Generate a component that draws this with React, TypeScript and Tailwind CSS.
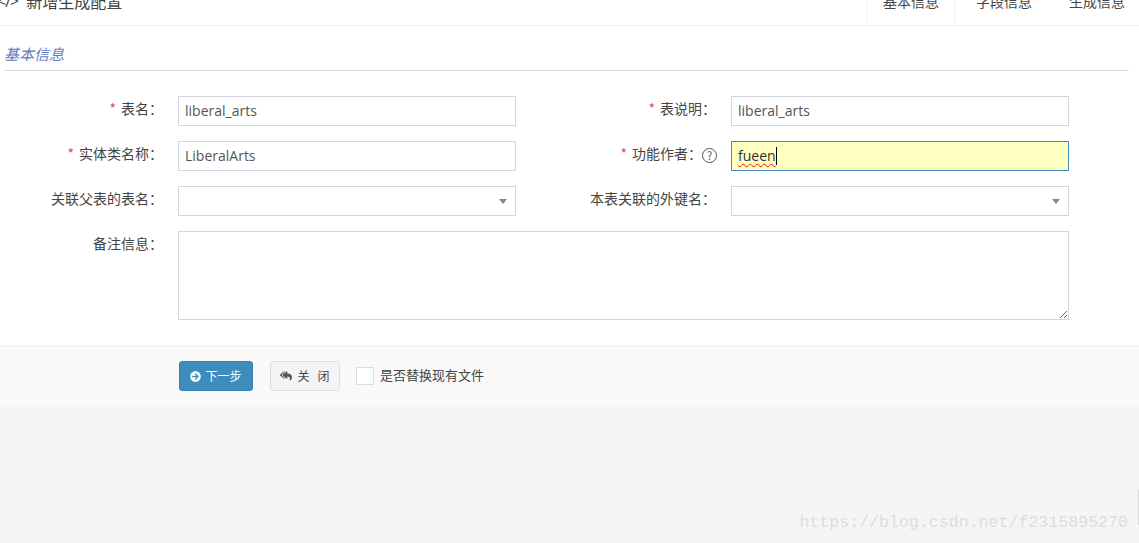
import { FaReplyAll, FaArrowCircleRight } from "react-icons/fa";

const cjk = "font-['Noto_Sans_CJK_SC','Noto_Sans',sans-serif]";
const inputBox = "h-[30px] w-[338px] border border-[#d2d6de] bg-white px-[6px] pb-[1px] text-[14px] text-[#555] font-['Open_Sans',sans-serif] outline-none";

function Label({ text, required, help, width }: { text: string; required?: boolean; help?: boolean; width: string }) {
  return (
    <div className={`${width} shrink-0 flex items-center justify-end pb-[6px] text-[14px] text-[#444] whitespace-nowrap`}>
      {required && <span className="mr-[5px] text-[14px] text-[#dd4b50]">*</span>}
      <span>{text}：</span>
      {help && (
        <span className="mt-[4px] flex h-[15px] w-[15px] items-center justify-center rounded-full border border-[#555] text-[11px] leading-none text-[#555]">?</span>
      )}
    </div>
  );
}

function Select() {
  return (
    <div className="relative h-[30px] w-[338px] border border-[#d2d6de] bg-white">
      <span className="absolute right-[8px] top-[12px] h-0 w-0 border-x-[4px] border-t-[5px] border-x-transparent border-t-[#888]" />
    </div>
  );
}

export default function App() {
  return (
    <div className={`relative h-[543px] w-[1139px] overflow-hidden bg-[#f4f5f7] ${cjk}`}>
      <div className="bg-white">
        {/* header with tabs, cut off at the top of the shot */}
        <div className="flex h-[26px] items-end justify-between overflow-hidden border-b border-[#eeeeee]">
          <div className="mb-[14px] flex items-center whitespace-nowrap text-[16px] leading-[20px] text-[#444]">
            <span className="ml-[-3px] mr-[8px] font-['Open_Sans',sans-serif] text-[16px] tracking-[-1px]">&lt;/&gt;</span>
            <span>新增生成配置</span>
          </div>
          <div className="mb-[-1px] flex h-[40px] shrink-0 whitespace-nowrap text-[14px] text-[#444]">
            <div className="w-[88px] border-x border-[#f2f2f2] bg-white pl-[15px] pt-[5px] leading-[20px]">基本信息</div>
            <div className="w-[93px] border-b border-[#eeeeee] pl-[21px] pt-[5px] leading-[20px]">字段信息</div>
            <div className="w-[91px] border-b border-[#eeeeee] pl-[21px] pt-[5px] leading-[20px]">生成信息</div>
          </div>
        </div>

        <div className="px-[4px] pr-[10px] pt-[18px]">
          <div className="h-[27px] border-b border-[#dddddd] text-[15px] italic leading-[20px] text-[#6379bd]">基本信息</div>
        </div>

        <div className="flex flex-col gap-[15px] pb-[25px] pt-[25px]">
          <div className="flex">
            <Label text="表名" required width="w-[163px]" />
            <input className={`ml-[15px] ${inputBox}`} defaultValue="liberal_arts" />
            <Label text="表说明" required width="w-[200px]" />
            <input className={`ml-[15px] ${inputBox}`} defaultValue="liberal_arts" />
          </div>
          <div className="flex">
            <Label text="实体类名称" required width="w-[163px]" />
            <input className={`ml-[15px] ${inputBox}`} defaultValue="LiberalArts" />
            <Label text="功能作者" required help width="w-[201px]" />
            <div className="ml-[14px] flex h-[30px] w-[338px] items-center border border-[#3c8dbc] bg-[#ffffc0] px-[6px] pb-[1px] font-['Open_Sans',sans-serif] text-[14px] text-[#333]">
              <span className="underline decoration-[#f01010] decoration-wavy decoration-1 underline-offset-2">fueen</span>
              <span className="h-[18px] w-px bg-black" />
            </div>
          </div>
          <div className="flex">
            <Label text="关联父表的表名" width="w-[163px]" />
            <div className="ml-[15px]"><Select /></div>
            <Label text="本表关联的外键名" width="w-[200px]" />
            <div className="ml-[15px]"><Select /></div>
          </div>
          <div className="flex">
            <div className="flex w-[163px] shrink-0 justify-end pt-[2px] text-[14px] text-[#444]">备注信息：</div>
            <textarea className="ml-[15px] h-[89px] w-[891px] resize-y border border-[#d2d6de] bg-white outline-none" />
          </div>
        </div>
      </div>

      {/* footer actions */}
      <div className="flex h-[61px] items-center border-t border-[#f2f2f2] bg-[#f9f9f9] pl-[179px] text-[13px]">
        <button className="flex h-[30px] w-[74px] items-center justify-center gap-[4px] rounded-[3px] border border-[#367fa9] bg-[#3c8dbc] text-[12px] text-white">
          <FaArrowCircleRight className="h-[11px] w-[11px]" />
          下一步
        </button>
        <button className="ml-[17px] flex h-[30px] w-[70px] items-center justify-center gap-[5px] rounded-[3px] border border-[#dddddd] bg-[#f4f4f4] text-[12px] text-[#444]">
          <FaReplyAll className="h-[12px] w-[12px] text-[#555]" />
          <span>关&nbsp;&nbsp;&nbsp;闭</span>
        </button>
        <span className="ml-[16px] h-[18px] w-[18px] border border-[#dddddd] bg-white" />
        <span className="ml-[6px] pb-[3px] text-[13px] text-[#444]">是否替换现有文件</span>
      </div>

      {/* blog watermark over the shot */}
      <div className="absolute bottom-[10px] right-[11px] font-['Liberation_Mono',monospace] text-[16.6px] leading-[20px] text-[#dcdddb]">
        https://blog.csdn.net/f2315895270
      </div>
      <div className="absolute right-0 top-[490px] h-[35px] w-px bg-[#d8d8d8]" />
    </div>
  );
}
